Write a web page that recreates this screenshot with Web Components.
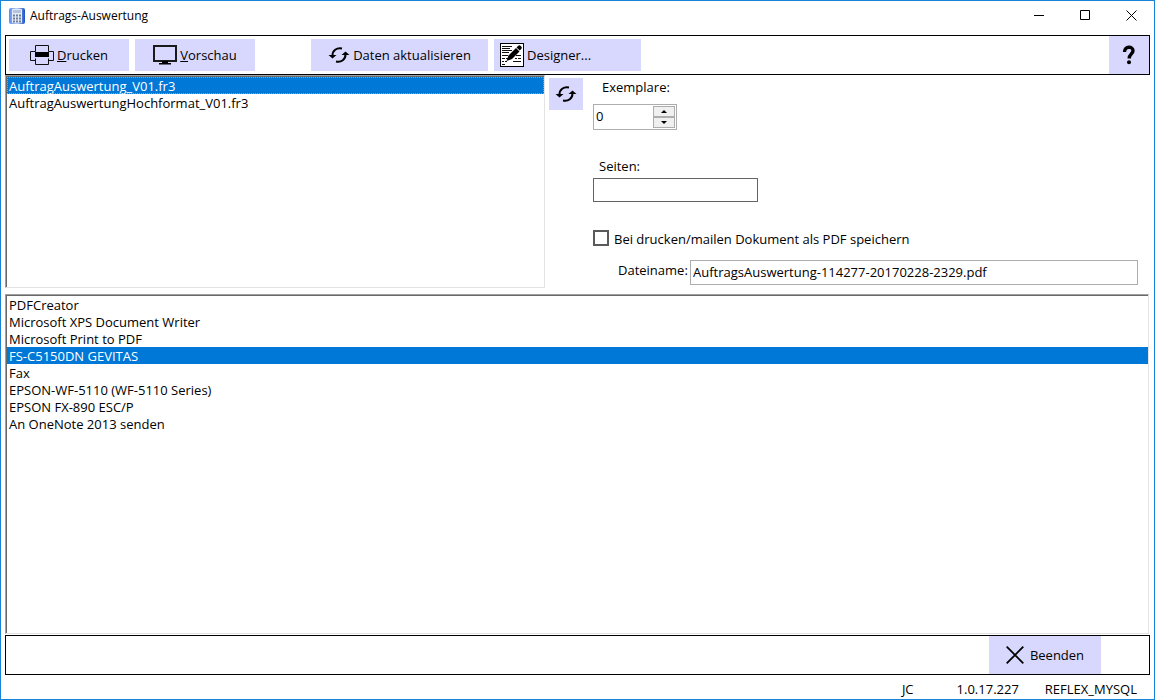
<!DOCTYPE html>
<html lang="de">
<head>
<meta charset="utf-8">
<title>Auftrags-Auswertung</title>
<style>
  html, body { height: 100%; margin: 0; }
  body { font: 13px/17px "Open Sans", "Noto Sans", sans-serif; color: #000; background: #fff; }
</style>
</head>
<body>
<app-window>
  <title-bar slot="title">Auftrags-Auswertung</title-bar>
  <tool-bar slot="toolbar">
    <tool-button icon="printer" style="--w:120px"><u>D</u>rucken</tool-button>
    <tool-button icon="monitor" style="--w:120px"><u>V</u>orschau</tool-button>
    <tool-button icon="refresh" class="group" style="--w:177px">Daten aktualisieren</tool-button>
    <tool-button icon="design" style="--w:147px;--justify:flex-start">Designer...</tool-button>
    <tool-button icon="help" slot="end" label="Hilfe" style="--w:40px;--h:38px"></tool-button>
  </tool-bar>
  <list-box slot="reports" label="Berichte" focused selected="0" items="AuftragAuswertung_V01.fr3|AuftragAuswertungHochformat_V01.fr3"></list-box>
  <tool-button slot="reload" icon="refresh" label="Liste aktualisieren" style="--w:34px"></tool-button>
  <print-options slot="options"></print-options>
  <list-box slot="printers" label="Drucker" selected="3" items="PDFCreator|Microsoft XPS Document Writer|Microsoft Print to PDF|FS-C5150DN GEVITAS|Fax|EPSON-WF-5110 (WF-5110 Series)|EPSON FX-890 ESC/P|An OneNote 2013 senden"></list-box>
  <tool-bar slot="actions" style="--inset:48px">
    <tool-button icon="close" slot="end" style="--w:112px;--h:38px">Beenden</tool-button>
  </tool-bar>
  <status-bar slot="status"><span>JC</span><span>1.0.17.227</span><span>REFLEX_MYSQL</span></status-bar>
</app-window>

<script>
const ICONS = {
  printer: `<svg width="24" height="20" viewBox="0 0 24 20" fill="none" stroke="#111"><path d="M5.500 6.500v-6h13v6M5.500 15.500h-5v-9h5M18.500 15.500h5v-9h-5M5.500 13.500v6h13v-6"/><path d="M5 7h14v5H5z" fill="#000" stroke="none"/></svg>`,
  monitor: `<svg width="24" height="20" viewBox="0 0 24 20"><rect x="1" y="1" width="22" height="15" fill="none" stroke="#1a1a1a" stroke-width="2"/><path d="M9 16h6v2h3v1.500H6V18h3z" fill="#000"/></svg>`,
  refresh: `<svg width="22" height="18" viewBox="0 0 22 18"><g fill="none" stroke="#000" stroke-width="2"><path d="M4.500 9.500C4.500 4.500 8.500 1.500 14 2.500"/><path d="M17.500 8.500C17.500 13.500 13.500 16.500 8 15.500"/></g><path d="M.5 9h8L4.500 12.500zM21.500 9h-8L17.500 5.500z"/></svg>`,
  design: `<svg width="24" height="24" viewBox="0 0 24 24"><rect x=".5" y=".5" width="23" height="23" fill="#fff" stroke="#000"/><path d="M2 3.500h10M2 5.500h8M2 7.500h10M2 9.500h7M2 12.500h6M2 15.500h3M6 15.500h2M2 18.500h2M5 18.500h2M2 21.500h3M16 12.500h5M15 15.500h2M18 15.500h3M13 18.500h8M14 10.500h3" stroke="#111" stroke-width="1"/><path d="M6.500 18l2-5.500L16 5l3.500 3.500L12 16z"/><path d="M16.500 4.500l1.500-1.500c1-1 2-.8 3 .2s1 2 .2 2.800L19.800 7.500z"/></svg>`,
  help: `<svg width="14" height="20" viewBox="0 0 14 20"><path d="M2.500 7C2.500 .8 11 .8 11 5.800 11 9 7.200 9 7.200 13.500" fill="none" stroke="#000" stroke-width="3.400"/><circle cx="7" cy="17.300" r="2"/></svg>`,
  close: `<svg width="18" height="18" viewBox="0 0 18 18"><path d="M.7 .7l16.600 16.600M17.300 .7L.7 17.300" stroke="#000" stroke-width="1.800"/></svg>`
};
const define = (name, html, setup) => customElements.define(name, class extends HTMLElement {
  constructor() { super(); this.attachShadow({ mode: "open" }); }
  connectedCallback() {
    const t = document.createElement("template");
    t.innerHTML = "<style>*{box-sizing:border-box}</style>" + html;
    this.shadowRoot.replaceChildren(t.content.cloneNode(true));
    if (setup) setup(this, this.shadowRoot);
  }
});

define("app-window", `<style>
  :host { display: flex; flex-direction: column; box-sizing: border-box; min-height: 100vh; border: 1px solid #1883d7; padding: 0 4px; }
  .top { display: grid; grid-template-columns: 540fr 48px 557fr; align-items: start; }
  .reports { display: flex; height: 213px; }
  .reload { padding: 3px 0 0 4px; }
  .printers { flex: 1; display: flex; margin: 6px 1px 1px 0; }
  .reports > ::slotted(*), ::slotted([slot=printers]) { flex: 1; }
</style>
<slot name="title"></slot>
<slot name="toolbar"></slot>
<main class="top"><div class="reports"><slot name="reports"></slot></div><div class="reload"><slot name="reload"></slot></div><div class="options"><slot name="options"></slot></div></main>
<div class="printers"><slot name="printers"></slot></div>
<slot name="actions"></slot>
<slot name="status"></slot>`);

define("title-bar", `<style>
  :host { display: flex; align-items: center; height: 34px; padding-bottom: 5px; box-sizing: border-box; font-size: 12px; }
  .app { margin: 0 5px 0 4px; }
  h1 { font: inherit; margin: 0; flex: 1; }
  button { width: 46px; height: 29px; border: 0; padding: 0; background: none; display: grid; place-items: center; }
  nav { display: flex; margin-right: -4px; }
</style>
<svg class="app" width="16" height="16" viewBox="0 0 16 16"><defs><linearGradient id="g"><stop stop-color="#5b8cf0"/><stop offset=".5" stop-color="#b9cdf8"/><stop offset="1" stop-color="#174fc8"/></linearGradient></defs><rect width="16" height="16" rx="2" fill="url(#g)"/><rect x="3" y="1" width="10" height="14" rx="1" fill="#e6ecf7"/><path d="M4 3.500h8" stroke="#b4c4df" stroke-width="3"/><path d="M4 7.500h8M4 10.500h8M4 13.500h8" stroke="#6a7d99" stroke-width="2" stroke-dasharray="2 1"/></svg>
<h1><slot></slot></h1>
<nav>
<button aria-label="Minimieren"><svg width="11" height="11"><path d="M0 5.500h10" stroke="#000"/></svg></button>
<button aria-label="Maximieren"><svg width="11" height="11"><path d="M.5 .5h9v9h-9z" fill="none" stroke="#000"/></svg></button>
<button aria-label="Schließen"><svg width="11" height="11"><path d="M.5 .5l10 10M10.500 .5l-10 10" stroke="#000"/></svg></button>
</nav>`);

define("tool-bar", `<style>
  :host { display: flex; align-items: center; box-sizing: border-box; height: 40px; border: 1px solid #000; padding: 0 var(--inset, 0) 0 3px; gap: 6px; }
  ::slotted(.group) { margin-left: 50px; }
  .space { flex: 1; }
</style><slot></slot><span class="space"></span><slot name="end"></slot>`);

define("tool-button", `<style>
  :host { display: block; }
  button { display: flex; align-items: center; justify-content: var(--justify, center); gap: 3px; width: var(--w); height: var(--h, 32px); border: 0; padding: 0 6px; background: #d8d8ff; font: inherit; color: inherit; white-space: nowrap; }
  svg { flex: none; }
  .close { gap: 6px; }
</style><button type="button"></button>`, (el, root) => {
  const b = root.querySelector("button"), icon = el.getAttribute("icon");
  b.innerHTML = ICONS[icon] + (el.hasAttribute("label") ? "" : "<span><slot></slot></span>");
  b.classList.add(icon);
  if (el.hasAttribute("label")) b.setAttribute("aria-label", el.getAttribute("label"));
});

define("list-box", `<style>
  :host { display: flex; }
  .outer { flex: 1; display: flex; border: 1px solid; border-color: #a0a0a0 #e3e3e3 #e3e3e3 #a0a0a0; }
  ul { flex: 1; margin: 0; padding: 0; list-style: none; border: solid #696969; border-width: 1px 0 0 1px; outline: none; }
  li { height: 17px; line-height: 19px; padding: 0 2px; white-space: nowrap; }
  li[aria-selected=true] { background: #0078d7; color: #fff; }
  .focused li[aria-selected=true] { outline: 1px dotted #ff8728; outline-offset: -1px; }
</style><div class="outer"><ul role="listbox" tabindex="0"></ul></div>`, (el, root) => {
  const ul = root.querySelector("ul");
  ul.setAttribute("aria-label", el.getAttribute("label"));
  ul.classList.toggle("focused", el.hasAttribute("focused"));
  el.getAttribute("items").split("|").forEach((text, i) => {
    const li = document.createElement("li");
    li.role = "option";
    li.textContent = text;
    li.setAttribute("aria-selected", String(i) === el.getAttribute("selected"));
    li.onclick = () => [...ul.children].forEach(o => o.setAttribute("aria-selected", o === li));
    ul.append(li);
  });
});

define("print-options", `<style>
  :host { display: block; padding: 4px 12px 0 0; }
  form { display: flex; flex-direction: column; align-items: flex-start; }
  input { font: inherit; color: inherit; border: 1px solid #adadad; border-radius: 0; padding: 0 2px 2px; margin: 0; background: #fff; outline: none; }
  .group { display: flex; flex-direction: column; margin-bottom: 28px; }
  .group label { padding-left: 6px; height: 20px; }
  .copies label { padding-left: 9px; height: 25px; }
  .spin { display: flex; width: 84px; height: 26px; border: 1px solid #adadad; padding: 1px; }
  .spin input { border: 0; padding: 0 1px 2px; flex: 1; min-width: 0; }
  .steps { display: flex; flex-direction: column; width: 22px; }
  .steps button { flex: 1; min-height: 0; padding: 0; border: 1px solid #adadad; background: #f0f0f0; display: grid; place-items: center; }
  #pages { width: 165px; height: 24px; border-color: #646464; }
  .check { display: flex; align-items: center; gap: 5px; height: 16px; margin-bottom: 14px; }
  .check label { padding-top: 2px; }
  #pdf { appearance: none; width: 16px; height: 16px; padding: 0; border: 2px solid #5a5a5a; }
  #pdf:checked { background: #5a5a5a content-box; padding: 2px; }
  .file { display: flex; align-self: stretch; gap: 3px; }
  .file label { width: 94px; padding: 2px 0 0 25px; white-space: nowrap; }
  #file { flex: 1; min-width: 0; height: 25px; }
</style>
<form>
<div class="group copies"><label for="copies">Exemplare:</label><div class="spin"><input id="copies" value="0" inputmode="numeric"><div class="steps"><button type="button" aria-label="Mehr"><svg width="6" height="3"><path d="M0 3l3-3 3 3z"/></svg></button><button type="button" aria-label="Weniger"><svg width="6" height="3"><path d="M0 0l3 3 3-3z"/></svg></button></div></div></div>
<div class="group"><label for="pages">Seiten:</label><input id="pages"></div>
<div class="check"><input type="checkbox" id="pdf"><label for="pdf">Bei drucken/mailen Dokument als PDF speichern</label></div>
<div class="file"><label for="file">Dateiname:</label><input id="file" value="AuftragsAuswertung-114277-20170228-2329.pdf"></div>
</form>`, (el, root) => {
  const n = root.querySelector("#copies"), [up, down] = root.querySelectorAll(".steps button");
  up.onclick = () => n.value = +n.value + 1;
  down.onclick = () => n.value = Math.max(0, n.value - 1);
});

define("status-bar", `<style>
  :host { display: flex; justify-content: flex-end; align-items: center; height: 24px; padding: 5px 13px 0 0; gap: 26px; box-sizing: border-box; }
  ::slotted(:first-child) { margin-right: 17px; }
</style><slot></slot>`);
</script>
</body>
</html>
